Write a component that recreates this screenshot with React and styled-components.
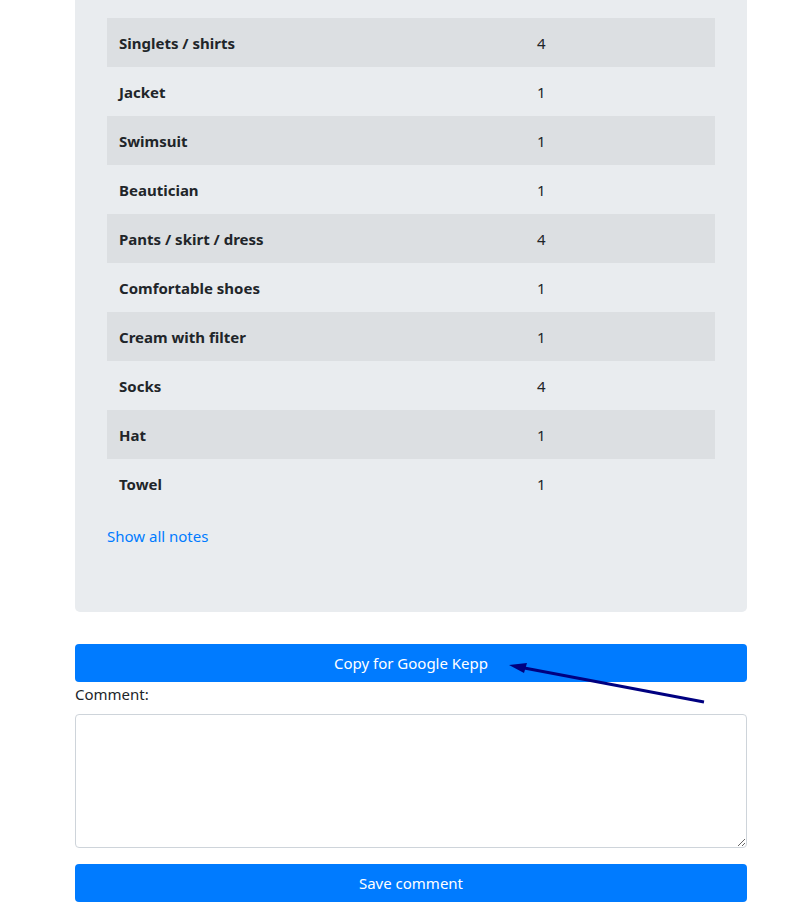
import React from "react";
import styled, { createGlobalStyle } from "styled-components";

const GlobalStyle = createGlobalStyle`
  html, body {
    margin: 0;
    padding: 0;
    background: #fff;
  }
  body {
    font-family: "Noto Sans", "Open Sans", "Liberation Sans", sans-serif;
    font-size: 16px;
    color: #212529;
  }
`;

const items = [
  { name: "Singlets / shirts", count: 4 },
  { name: "Jacket", count: 1 },
  { name: "Swimsuit", count: 1 },
  { name: "Beautician", count: 1 },
  { name: "Pants / skirt / dress", count: 4 },
  { name: "Comfortable shoes", count: 1 },
  { name: "Cream with filter", count: 1 },
  { name: "Socks", count: 4 },
  { name: "Hat", count: 1 },
  { name: "Towel", count: 1 },
];

function App() {
  return (
    <Main>
      <GlobalStyle />
      <Panel>
        <Table>
          <tbody>
            {items.map((it, i) => (
              <Row key={it.name} $striped={i % 2 === 0}>
                <NameCell>{it.name}</NameCell>
                <CountCell>{it.count}</CountCell>
              </Row>
            ))}
          </tbody>
        </Table>
        <NotesLink href="#">Show all notes</NotesLink>
      </Panel>

      <ButtonWrap>
        <Button>Copy for Google Kepp</Button>
        <Arrow width="220" height="50" viewBox="0 0 220 50">
          <line x1="199" y1="40" x2="14" y2="5" stroke="#000080" strokeWidth="3" />
          <polygon points="4,3 22,1 19,11" fill="#000080" />
        </Arrow>
      </ButtonWrap>
      <Label>Comment:</Label>
      <TextArea />
      <SaveButton>Save comment</SaveButton>
    </Main>
  );
}

export default App;

const Main = styled.div`
  width: 672px;
  margin: 0 auto 0 75px;
  display: flex;
  flex-direction: column;
`;

const Panel = styled.div`
  background: #e9ecef;
  border-radius: 0 0 5px 5px;
  padding: 18px 32px 64px;
`;

const Table = styled.table`
  width: 100%;
  border-collapse: collapse;
  margin-bottom: 16px;
`;

const Row = styled.tr`
  background: ${(p) => (p.$striped ? "#dcdfe2" : "transparent")};
  height: 49px;
`;

const NameCell = styled.td`
  width: 394px;
  padding: 0 12px;
  font-weight: 700;
  font-size: 15px;
  vertical-align: middle;
`;

const CountCell = styled.td`
  padding: 0 12px;
  font-size: 15px;
  vertical-align: middle;
`;

const NotesLink = styled.a`
  color: #007bff;
  text-decoration: none;
  font-size: 15px;
  display: block;
  line-height: 24px;
  margin-top: 7px;
`;

const ButtonWrap = styled.div`
  position: relative;
  margin-top: 32px;
`;

const Button = styled.button`
  width: 100%;
  height: 38px;
  border: none;
  border-radius: 4px;
  background: #007bff;
  color: #fff;
  font-family: inherit;
  font-size: 15px;
  cursor: pointer;
  display: block;
`;

const SaveButton = styled(Button)`
  margin-top: 16px;
`;

const Arrow = styled.svg`
  position: absolute;
  left: 430px;
  top: 18px;
  overflow: visible;
`;

const Label = styled.label`
  font-size: 15px;
  line-height: 24px;
  height: 26px;
`;

const TextArea = styled.textarea`
  box-sizing: border-box;
  width: 100%;
  height: 134px;
  border: 1px solid #ced4da;
  border-radius: 4px;
  resize: vertical;
  font-family: inherit;
  margin: 6px 0 0;
`;
